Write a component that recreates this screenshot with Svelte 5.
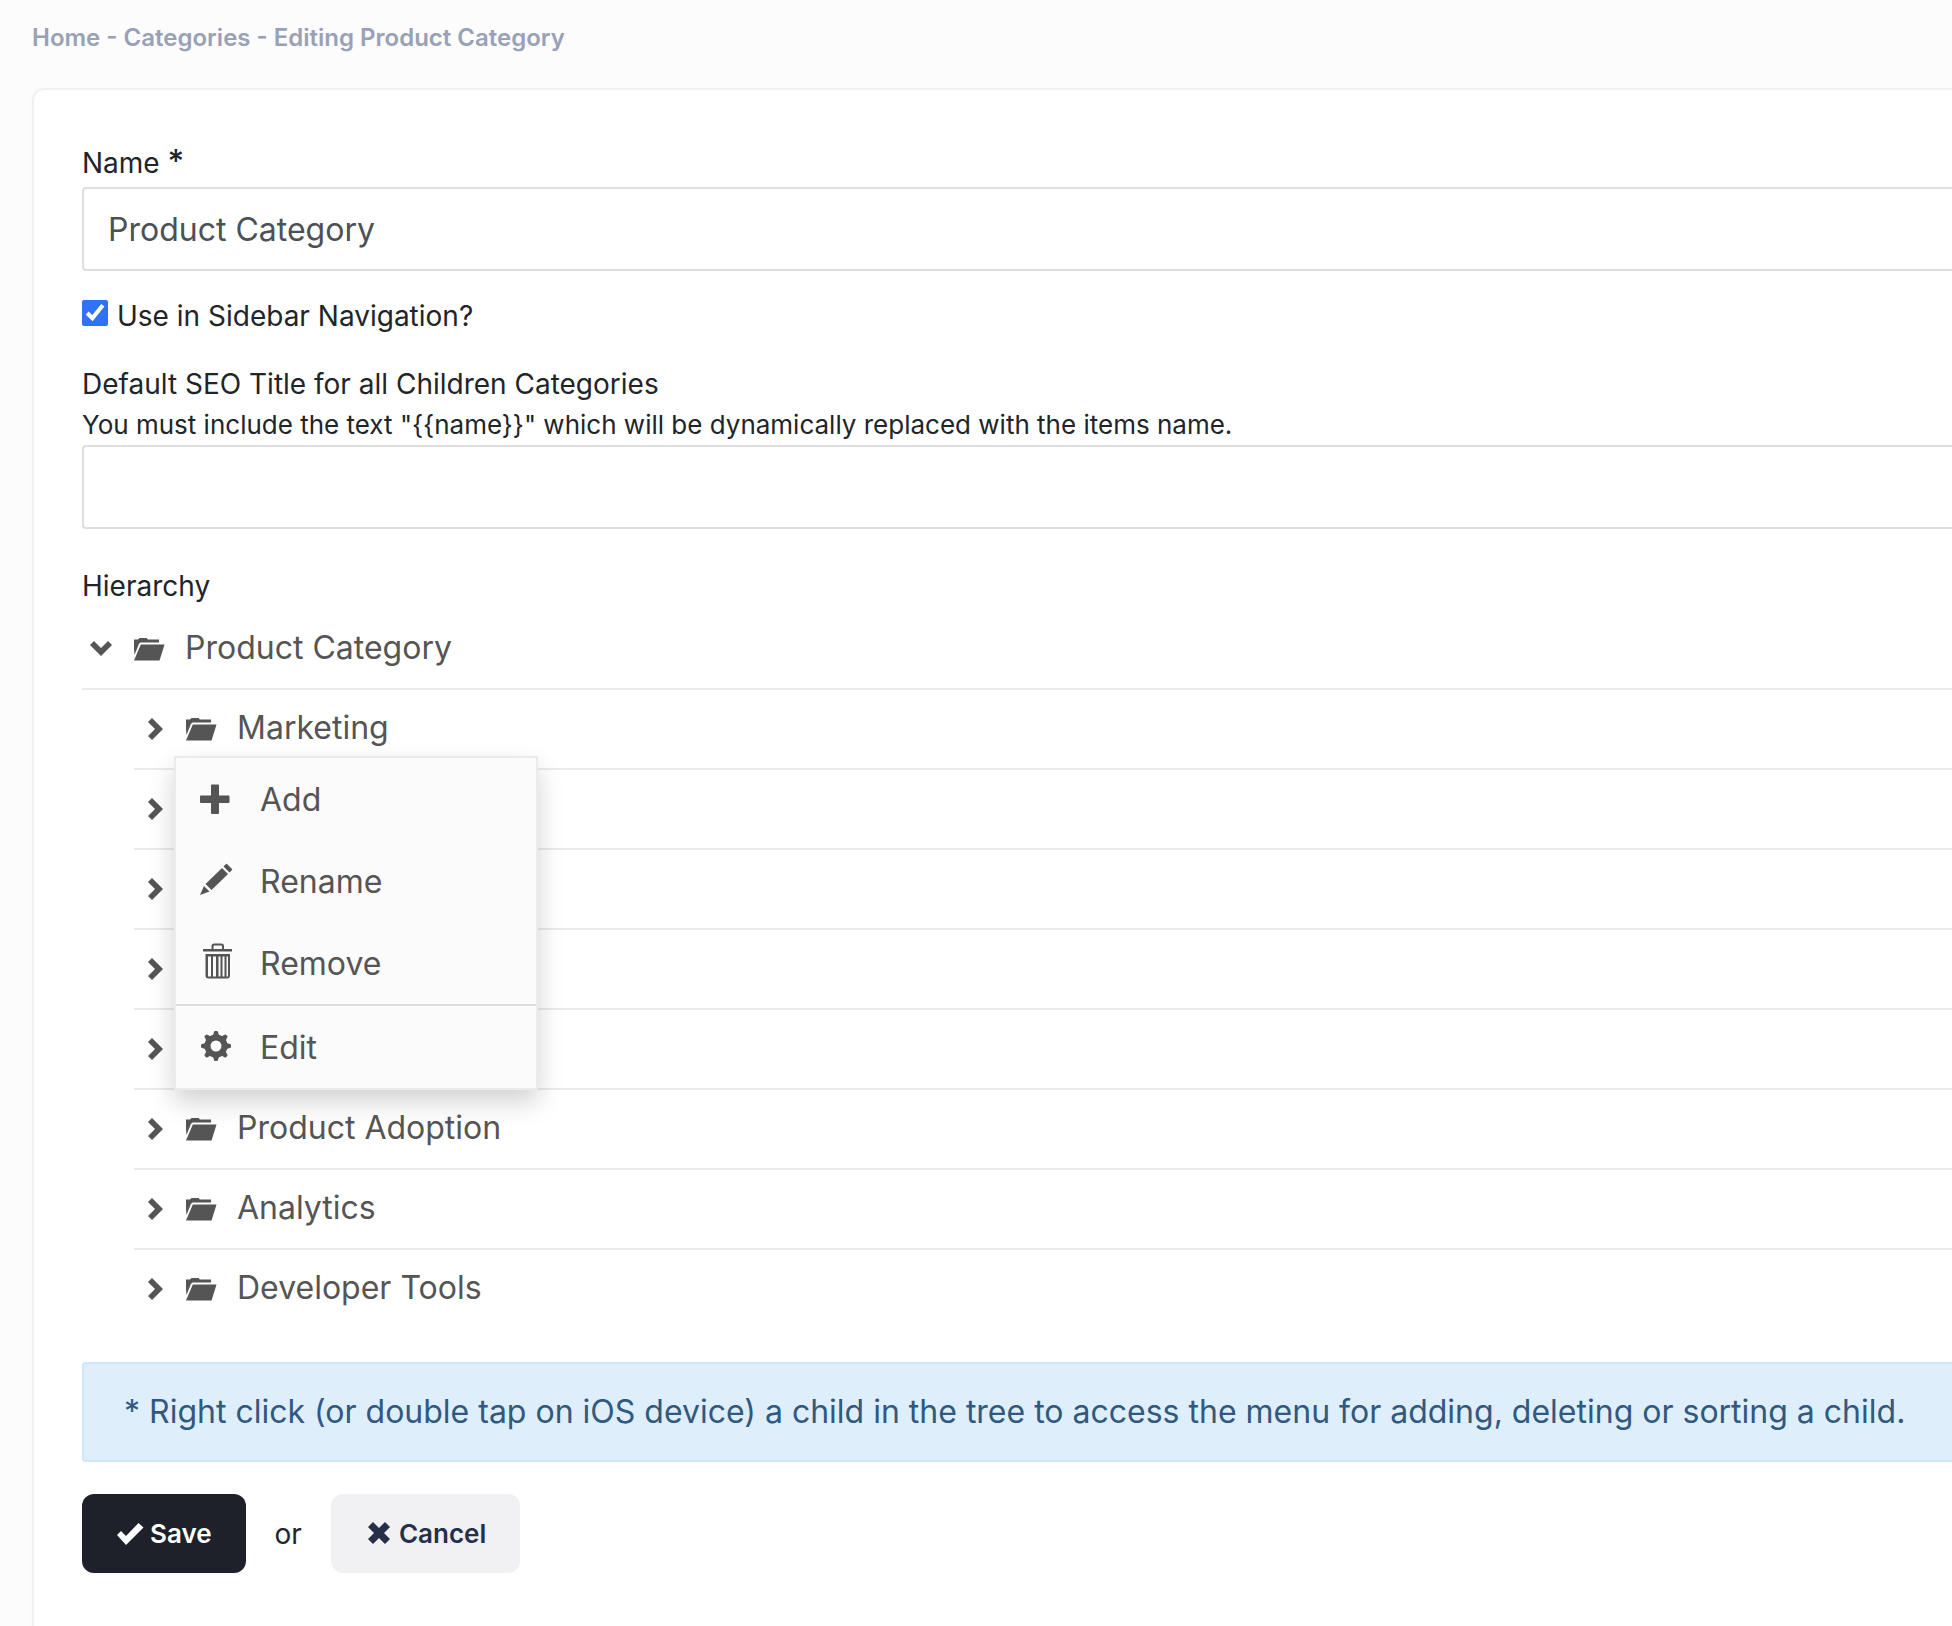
<script lang="ts">
  type Category = {
    id: number;
    label: string;
  };

  let name = 'Product Category';
  let useInSidebar = true;
  let seoTitle = '';

  const placeholder = '{{name}}';

  const categories: Category[] = [
    { id: 1, label: 'Marketing' },
    { id: 2, label: '' },
    { id: 3, label: '' },
    { id: 4, label: '' },
    { id: 5, label: '' },
    { id: 6, label: 'Product Adoption' },
    { id: 7, label: 'Analytics' },
    { id: 8, label: 'Developer Tools' },
  ];

  const menuItems = ['Add', 'Rename', 'Remove', 'Edit'];

  let expanded = true;
  let menuFor: number | null = 1;

  function openMenu(e: MouseEvent, id: number) {
    e.preventDefault();
    menuFor = id;
  }

  function closeMenu() {
    menuFor = null;
  }

  function handleKeydown(e: KeyboardEvent) {
    if (e.key === 'Escape') closeMenu();
  }
</script>

<svelte:window on:keydown={handleKeydown} />

{#snippet folder()}
  <svg class="folder" viewBox="0 0 32 32" aria-hidden="true">
    <path d="M1 18V8.500H5L6.500 7H13.500L15 8.500H26V11.500H7.500L6 12.700L1.500 24Z" />
    <path d="M7.800 13.500H31.500L26.500 29.500H1Z" />
  </svg>
{/snippet}

<div class="page">
  <nav class="breadcrumb" aria-label="Breadcrumb">
    <a href="#home">Home</a> - <a href="#categories">Categories</a> - <span>Editing Product Category</span>
  </nav>

  <form class="card" on:submit|preventDefault>
    <label class="label name-label" for="name">Name <span class="required">*</span></label>
    <input class="text-input" id="name" type="text" bind:value={name} />

    <div class="check-row">
      <input id="sidebar" type="checkbox" bind:checked={useInSidebar} />
      <label for="sidebar">Use in Sidebar Navigation?</label>
    </div>

    <label class="label" for="seo">Default SEO Title for all Children Categories</label>
    <p class="hint" id="seo-hint">
      You must include the text "{placeholder}" which will be dynamically replaced with the items name.
    </p>
    <input class="text-input" id="seo" type="text" aria-describedby="seo-hint" bind:value={seoTitle} />

    <h2 class="label section">Hierarchy</h2>

    <ul class="tree">
      <li>
        <div class="row">
          <button
            type="button"
            class="toggle"
            aria-label="Toggle"
            aria-expanded={expanded}
            on:click={() => (expanded = !expanded)}
          >
            <svg viewBox="0 0 24 24" aria-hidden="true">
              <path d="M4 4L11 11L18 4L22 8L11 19L0 8Z" />
            </svg>
          </button>
          {@render folder()}
          <span class="node">Product Category</span>
        </div>

        {#if expanded}
          <ul class="children">
            {#each categories as category (category.id)}
              <li>
                <!-- svelte-ignore a11y_no_static_element_interactions -->
                <div class="row" on:contextmenu={(e) => openMenu(e, category.id)}>
                  <button type="button" class="toggle" aria-label="Toggle" aria-expanded="false">
                    <svg viewBox="0 0 24 24" aria-hidden="true">
                      <path d="M10 1L21 12L10 23L6 19L13 12L6 5Z" />
                    </svg>
                  </button>
                  {@render folder()}
                  <span class="node">{category.label}</span>
                </div>

                {#if menuFor === category.id}
                  <div class="menu" role="menu">
                    {#each menuItems as item}
                      <button type="button" role="menuitem" class="menu-item" on:click={closeMenu}>
                        <svg viewBox="0 0 32 36" aria-hidden="true">
                          {#if item === 'Add'}
                            <path d="M12 3.500H18Q19 3.500 19 4.500V14.500H28.500Q29.500 14.500 29.500 15.500V21Q29.500 22 28.500 22H19V32Q19 33 18 33H12Q11 33 11 32V22H1Q0 22 0 21V15.500Q0 14.500 1 14.500H11V4.500Q11 3.500 12 3.500Z" />
                          {:else if item === 'Rename'}
                            <path d="M27 1L32 6Q32.500 6.500 32 7L29.500 9.500L23.500 3.500L26 1Q26.500 0.500 27 1Z" />
                            <path d="M22 5L28 11L11.500 27L5.500 21Z" />
                            <path d="M4 23L9.500 28.500L0 32Z" />
                          {:else if item === 'Remove'}
                            <path d="M11.500 4V1Q11.500 -1.500 14 -1.500H21.500Q24 -1.500 24 1V4H32V6.500H3V4ZM13.500 4H22V1.500Q22 0.500 21 0.500H14.500Q13.500 0.500 13.500 1.500Z" fill-rule="evenodd" />
                            <path d="M5.500 9H30V30.500Q30 33.500 27 33.500H8.500Q5.500 33.500 5.500 30.500ZM8 11.500V31.500H11V11.500ZM13 11.500V31.500H16V11.500ZM18.500 11.500V31.500H20.500V11.500ZM22.500 11.500V31.500H24.500V11.500ZM26.500 11.500V31.500H28V11.500Z" fill-rule="evenodd" />
                          {:else}
                            <circle cx="16" cy="17" r="8.500" fill="none" stroke="currentColor" stroke-width="6" />
                            {#each [0, 45, 90, 135, 180, 225, 270, 315] as angle}
                              <path d="M12.500 8L14 3Q14.300 2 15 2H17Q17.700 2 18 3L19.500 8Z" transform="rotate({angle} 16 17)" />
                            {/each}
                          {/if}
                        </svg>
                        {item}
                      </button>
                    {/each}
                  </div>
                {/if}
              </li>
            {/each}
          </ul>
        {/if}
      </li>
    </ul>

    <p class="alert">
      * Right click (or double tap on iOS device) a child in the tree to access the menu for adding, deleting or sorting a child.
    </p>

    <div class="actions">
      <button type="submit" class="btn save">
        <svg viewBox="0 0 28 24" aria-hidden="true">
          <path d="M1 13L5 9L10 14L22.500 1L27.500 5.500L10 23Z" />
        </svg>
        Save
      </button>
      <span>or</span>
      <button type="button" class="btn cancel">
        <svg viewBox="0 0 24 24" aria-hidden="true">
          <path d="M6 0L12 6L18 0L23 5L17 11L23 17L18 22L12 16L6 22L1 17L7 11L1 5Z" />
        </svg>
        Cancel
      </button>
    </div>
  </form>
</div>

<style>
  :global(body) {
    background: #fcfcfc;
  }

  .page {
    display: flex;
    flex-direction: column;
    min-height: 100vh;
    padding-left: 32px;
    box-sizing: border-box;
    font-family: Inter, "Liberation Sans", sans-serif;
    font-size: 28px;
    color: #212529;
  }

  .breadcrumb {
    padding: 18px 0 30px;
    font-size: 24px;
    line-height: 40px;
    font-weight: 600;
    color: #99a1b7;
  }

  .breadcrumb a {
    color: inherit;
    text-decoration: none;
  }

  .card {
    flex: 1;
    padding: 48px 0 48px 48px;
    background: #fff;
    border: 2px solid #f1f1f2;
    border-right: 0;
    border-bottom: 0;
    border-radius: 12px 0 0 0;
    box-shadow: 0 6px 8px rgba(0, 0, 0, 0.03);
  }

  .label {
    display: block;
    margin: 0;
    font-size: 28px;
    line-height: 42px;
    font-weight: 400;
  }

  .name-label {
    line-height: 48px;
  }

  .required {
    font-size: 32px;
    font-weight: 500;
  }

  .text-input {
    display: block;
    box-sizing: border-box;
    width: 100%;
    height: 84px;
    padding: 0 24px;
    border: 2px solid #dbdfe0;
    border-right: 0;
    border-radius: 4px 0 0 4px;
    background: #fff;
    color: #4b5157;
    font: inherit;
    font-size: 32px;
    outline: none;
  }

  .check-row {
    display: flex;
    align-items: center;
    gap: 9px;
    margin: 24px 0 26px;
    line-height: 42px;
  }

  .check-row input {
    width: 26px;
    height: 26px;
    margin: 0 0 6px;
    accent-color: #2f72f7;
  }

  .hint {
    margin: 0;
    font-size: 26px;
    line-height: 40px;
  }

  .section {
    margin: 36px 0 3px;
  }

  .tree,
  .children {
    list-style: none;
    margin: 0;
    padding: 0;
    font-size: 32px;
    color: #555;
  }

  .children {
    padding-left: 52px;
  }

  .children li {
    position: relative;
  }

  .row {
    display: flex;
    align-items: center;
    box-sizing: border-box;
    height: 80px;
    border-bottom: 2px solid #ebebeb;
  }

  .children li:last-child .row {
    border-color: transparent;
  }

  .toggle {
    display: flex;
    justify-content: center;
    width: 40px;
    padding: 0;
    border: 0;
    background: none;
    color: inherit;
    cursor: pointer;
  }

  .toggle svg {
    width: 24px;
    height: 24px;
  }

  svg {
    display: block;
    flex-shrink: 0;
    fill: currentColor;
  }

  .folder {
    width: 32px;
    height: 32px;
    margin: 0 20px 4px 11px;
  }

  .node {
    padding-bottom: 4px;
  }

  .menu {
    position: absolute;
    top: 66px;
    left: 40px;
    z-index: 10;
    width: 360px;
    border: 2px solid #ebebeb;
    background: #fbfbfb;
    box-shadow: 0 12px 24px rgba(0, 0, 0, 0.18);
  }

  .menu-item {
    display: flex;
    align-items: center;
    gap: 28px;
    width: 100%;
    height: 82px;
    padding: 0 24px;
    border: 0;
    background: none;
    color: inherit;
    font: inherit;
    text-align: left;
    cursor: pointer;
  }

  .menu-item:last-child {
    height: 84px;
    border-top: 2px solid #dedede;
  }

  .menu-item:hover {
    background: #f1f1f1;
  }

  .menu-item svg {
    width: 32px;
    height: 36px;
    overflow: visible;
  }

  .alert {
    margin: 32px 0;
    padding: 24px 40px;
    border: 2px solid #d0e7f8;
    border-right: 0;
    border-radius: 4px 0 0 4px;
    background: #deeefa;
    color: #31597f;
    font-size: 32px;
    line-height: 48px;
  }

  .actions {
    display: flex;
    align-items: center;
    gap: 29px;
  }

  .btn {
    display: flex;
    align-items: center;
    gap: 6px;
    height: 79px;
    padding: 0 34px;
    border: 0;
    border-radius: 12px;
    font: inherit;
    font-size: 26px;
    font-weight: 600;
    cursor: pointer;
  }

  .btn svg {
    width: 28px;
    height: 24px;
  }

  .save {
    background: #1e2129;
    color: #fff;
  }

  .cancel {
    background: #f1f1f4;
    color: #252f4a;
  }
</style>
